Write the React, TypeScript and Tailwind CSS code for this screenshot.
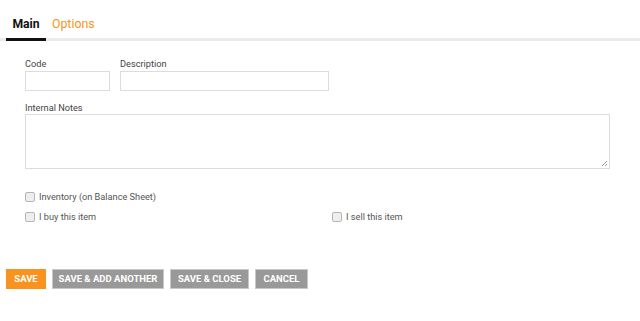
import React from 'react';

function Check({ label }: { label: string }) {
  return (
    <label className="flex items-center gap-[4px] text-[9.2px] leading-[15px] text-[#555]">
      <span className="block h-[10px] w-[10px] rounded-[2px] border border-[#b5b5b5] bg-[#eee]" />
      {label}
    </label>
  );
}

export default function App() {
  const btn = 'h-[20px] text-[9.5px] font-bold uppercase whitespace-nowrap text-white border';
  return (
    <div className="h-[321px] w-[640px] bg-white" style={{ fontFamily: 'Roboto, "Liberation Sans", sans-serif' }}>
      {/* Tabs */}
      <div className="flex pt-[14px] pl-[6px] border-b-[3px] border-[#ebebeb]">
        <div className="relative w-[40px] pb-[4px] text-center text-[12.2px] leading-[20px] font-bold text-[#111]">
          Main
          <span className="absolute left-0 right-0 -bottom-[3px] h-[3px] bg-[#111]" />
        </div>
        <div className="pl-[6px] text-[12.3px] leading-[20px] text-[#f7931e]">Options</div>
      </div>

      {/* Form */}
      <div className="pl-[25px] pr-[31px] pt-[17px]">
        <div className="flex gap-[10px]">
          <div className="flex flex-col gap-[1px]">
            <span className="text-[9.2px] leading-[12px] text-[#444]">Code</span>
            <div className="h-[20px] w-[85px] border border-[#dcdcdc]" />
          </div>
          <div className="flex flex-col gap-[1px]">
            <span className="text-[9.2px] leading-[12px] text-[#444]">Description</span>
            <div className="h-[20px] w-[209px] border border-[#dcdcdc]" />
          </div>
        </div>

        <div className="mt-[11px] flex flex-col">
          <span className="text-[9.2px] leading-[12px] text-[#444]">Internal Notes</span>
          <div className="relative h-[55px] w-[585px] border border-[#dcdcdc]">
            <svg className="absolute right-[1px] bottom-[1px]" width="7" height="7" viewBox="0 0 7 7">
              <path d="M6 1L1 6M6 4L4 6" stroke="#999" strokeWidth="1" />
            </svg>
          </div>
        </div>

        <div className="mt-[20px]">
          <Check label="Inventory (on Balance Sheet)" />
        </div>
        <div className="mt-[5px] flex">
          <div className="w-[307px]">
            <Check label="I buy this item" />
          </div>
          <Check label="I sell this item" />
        </div>
      </div>

      {/* Buttons */}
      <div className="mt-[45px] flex gap-[6px] pl-[6px]">
        <button className={`${btn} w-[40px] bg-[#f7931e] border-[#f7931e]`}>Save</button>
        <button className={`${btn} w-[112px] bg-[#999] border-[#c8c8c8]`}>Save &amp; Add Another</button>
        <button className={`${btn} w-[79px] bg-[#999] border-[#c8c8c8]`}>Save &amp; Close</button>
        <button className={`${btn} w-[53px] bg-[#999] border-[#c8c8c8]`}>Cancel</button>
      </div>
    </div>
  );
}
